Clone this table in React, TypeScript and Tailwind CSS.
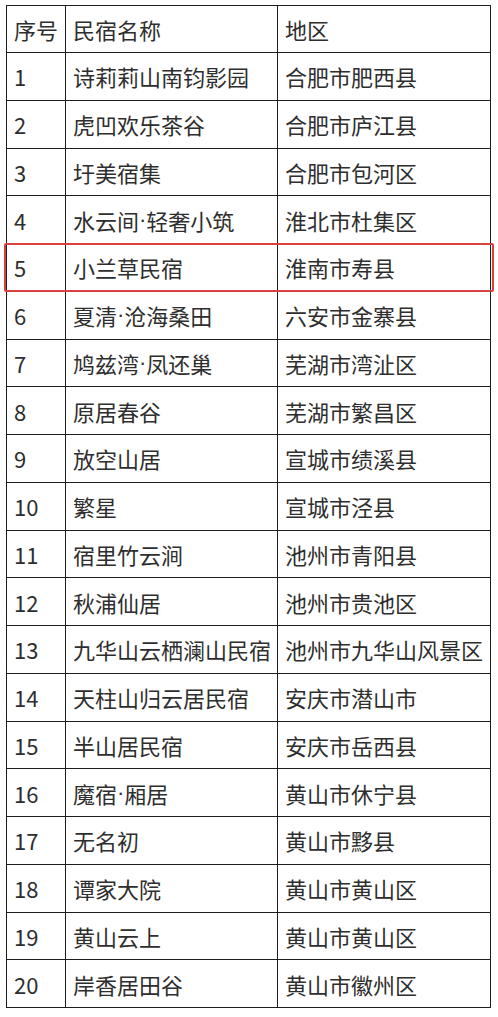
import React from "react";

const rows: [string, string, string][] = [
  ["1", "诗莉莉山南钧影园", "合肥市肥西县"],
  ["2", "虎凹欢乐茶谷", "合肥市庐江县"],
  ["3", "圩美宿集", "合肥市包河区"],
  ["4", "水云间·轻奢小筑", "淮北市杜集区"],
  ["5", "小兰草民宿", "淮南市寿县"],
  ["6", "夏清·沧海桑田", "六安市金寨县"],
  ["7", "鸠兹湾·凤还巢", "芜湖市湾沚区"],
  ["8", "原居春谷", "芜湖市繁昌区"],
  ["9", "放空山居", "宣城市绩溪县"],
  ["10", "繁星", "宣城市泾县"],
  ["11", "宿里竹云涧", "池州市青阳县"],
  ["12", "秋浦仙居", "池州市贵池区"],
  ["13", "九华山云栖澜山民宿", "池州市九华山风景区"],
  ["14", "天柱山归云居民宿", "安庆市潜山市"],
  ["15", "半山居民宿", "安庆市岳西县"],
  ["16", "魔宿·厢居", "黄山市休宁县"],
  ["17", "无名初", "黄山市黟县"],
  ["18", "谭家大院", "黄山市黄山区"],
  ["19", "黄山云上", "黄山市黄山区"],
  ["20", "岸香居田谷", "黄山市徽州区"],
];

// the middle dot is narrow in the original, so set it in a latin face
function Name({ text }: { text: string }) {
  const parts = text.split("·");
  return (
    <>
      {parts.map((p, i) => (
        <React.Fragment key={i}>
          {i > 0 && <span style={{ fontFamily: '"Liberation Sans", sans-serif' }}>·</span>}
          {p}
        </React.Fragment>
      ))}
    </>
  );
}

function Cell({ children }: { children: React.ReactNode }) {
  return (
    <div className="flex items-center pl-[7px] border-r border-b border-[#1e1e1e] whitespace-nowrap overflow-hidden">
      {children}
    </div>
  );
}

export default function App() {
  return (
    <div className="min-h-screen bg-white pl-[6px] pt-[5px]">
      <div
        className="w-[485px] border-l border-t border-[#1e1e1e] text-[22px] text-[#2e2e2e] leading-none"
        style={{ fontFamily: '"Noto Sans CJK SC", "Noto Sans", sans-serif' }}
      >
        {/* header */}
        <div className="grid grid-cols-[59px_212px_213px] h-[47px]">
          <Cell>序号</Cell>
          <Cell>民宿名称</Cell>
          <Cell>地区</Cell>
        </div>
        {rows.map(([no, name, area]) => (
          <div key={no} className="relative grid grid-cols-[59px_212px_213px] h-[47.75px]">
            <Cell>{no}</Cell>
            <Cell>
              <Name text={name} />
            </Cell>
            <Cell>{area}</Cell>
            {no === "5" && (
              <div className="absolute left-[-3px] right-[-3px] top-[-1px] bottom-0 border-[2.5px] border-[#d9413f] rounded-[2px] pointer-events-none" />
            )}
          </div>
        ))}
      </div>
    </div>
  );
}
